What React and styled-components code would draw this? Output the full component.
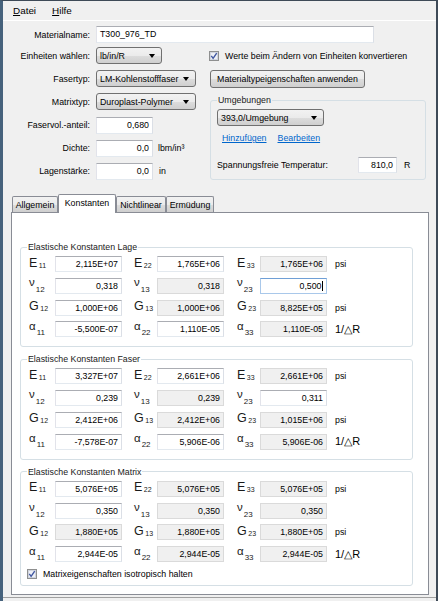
import React from 'react';
import styled, { createGlobalStyle, css } from 'styled-components';

const FONT = `"Liberation Sans", Arial, sans-serif`;

const GlobalStyle = createGlobalStyle`
  html, body { margin: 0; padding: 0; background: #f0f0f0; }
  body { font-family: ${FONT}; font-size: 8.8px; color: #000; }
  * { box-sizing: border-box; }
`;

const Window = styled.div`
  width: 438px;
  height: 601px;
  border-left: 3px solid #46627c;
  border-right: 2px solid #3e4a57;
  border-top: 1px solid #3e4a57;
  background: #f0f0f0;
  display: flex;
  flex-direction: column;
  overflow: hidden;
`;

const MenuBar = styled.div`
  height: 20px;
  flex: none;
  display: flex;
  align-items: center;
  gap: 16px;
  padding-left: 10px;
  border-bottom: 1px solid #ffffff;
  font-size: 9.9px;
`;

const MenuItem = styled.span`
  color: #000;
  & u { text-decoration: underline; text-underline-offset: 1px; }
`;

const TopArea = styled.div`
  flex: none;
  padding-top: 5px;
  display: flex;
  flex-direction: column;
  gap: 4px;
`;

const FieldRow = styled.div`
  display: flex;
  align-items: center;
  height: 17px;
`;

const Label = styled.span`
  width: 87px;
  margin-right: 6px;
  text-align: right;
  white-space: nowrap;
  flex: none;
`;

const Unit = styled.span`
  margin-left: ${p => p.$ml ?? 5}px;
  white-space: nowrap;
`;

const TextBox = styled.div`
  flex: none;
  height: ${p => p.$h ?? 16}px;
  width: ${p => (p.$w ? `${p.$w}px` : 'auto')};
  border: 1px solid;
  border-color: #abadb3 #dbdfe6 #e3e9ef #e2e3ea;
  background: #ffffff;
  text-align: ${p => (p.$left ? 'left' : 'right')};
  padding: 0 3px;
  line-height: ${p => (p.$h ?? 16) - 2}px;
  white-space: nowrap;
  overflow: hidden;
  ${p => p.$disabled && css`
    background: #f0f0f0;
    border-color: #dadada;
  `}
  ${p => p.$focus && css`
    border-color: #6f9fd6 #a9c8ea #a9c8ea #a9c8ea;
  `}
`;

const Caret = styled.span`
  display: inline-block;
  width: 1px;
  height: 10px;
  background: #000;
  margin-left: 0.5px;
  vertical-align: -2px;
`;

const btnFace = css`
  border: 1px solid #707070;
  border-radius: 3px;
  background: linear-gradient(to bottom, #f2f2f2 0%, #ebebeb 50%, #dddddd 51%, #cfcfcf 100%);
`;

const Combo = styled.div`
  ${btnFace}
  flex: none;
  width: ${p => p.$w}px;
  height: 17px;
  display: flex;
  align-items: center;
  justify-content: space-between;
  padding: 0 6px 0 3px;
  white-space: nowrap;
`;

const Arrow = styled.span`
  width: 0;
  height: 0;
  border-left: 3.5px solid transparent;
  border-right: 3.5px solid transparent;
  border-top: 4px solid #000;
  flex: none;
`;

const Button = styled.div`
  ${btnFace}
  width: ${p => p.$w}px;
  height: 18px;
  margin-left: 1px;
  margin-top: 6px;
  display: flex;
  align-items: center;
  justify-content: center;
  white-space: nowrap;
`;

const Columns = styled.div`
  display: flex;
`;

const LeftCol = styled.div`
  width: 206px;
  flex: none;
  display: flex;
  flex-direction: column;
  gap: 6.2px;
`;

const RightCol = styled.div`
  width: 217px;
  flex: none;
  display: flex;
  flex-direction: column;
`;

const CheckRow = styled.div`
  display: flex;
  align-items: center;
  gap: 6px;
  height: ${p => p.$h ?? 17}px;
  margin-left: ${p => p.$ml ?? 0}px;
  margin-top: ${p => p.$mt ?? 0}px;
  white-space: nowrap;
`;

const Group = styled.fieldset`
  margin: ${p => p.$mt ?? 0}px 0 0 ${p => p.$ml ?? 0}px;
  width: ${p => p.$w}px;
  border: 1px solid #d5dfe5;
  border-radius: 3px;
  padding: 3px ${p => p.$pr ?? 0}px ${p => p.$pb ?? 6}px ${p => p.$pl ?? 0}px;
  min-inline-size: 0;
`;

const Legend = styled.legend`
  padding: 0 1px;
  margin-left: ${p => p.$ml ?? 0}px;
  line-height: 12px;
  height: 12px;
  color: #1a1a1a;
`;

const LinkRow = styled.div`
  display: flex;
  gap: 11px;
  height: 12px;
  align-items: center;
  margin: 6px 0 0 5px;
`;

const Link = styled.span`
  color: #0066cc;
  text-decoration: underline;
`;

const TempRow = styled.div`
  display: flex;
  align-items: center;
  height: 16px;
  margin-top: 13px;
`;

const TempLabel = styled.span`
  width: 141px;
  flex: none;
  white-space: nowrap;
`;

const TabArea = styled.div`
  flex: 1;
  display: flex;
  flex-direction: column;
  margin: 14px 0 2px 8px;
  width: 418px;
  min-height: 0;
`;

const TabStrip = styled.div`
  height: 18px;
  flex: none;
  display: flex;
  align-items: flex-end;
  padding-left: 1px;
`;

const Tab = styled.div`
  width: ${p => p.$w}px;
  height: ${p => (p.$active ? 19 : 16)}px;
  margin-bottom: ${p => (p.$active ? -1 : 0)}px;
  border: 1px solid #898c95;
  border-bottom: none;
  border-radius: 2px 2px 0 0;
  display: flex;
  align-items: center;
  justify-content: center;
  white-space: nowrap;
  padding-bottom: ${p => (p.$active ? 3 : 0)}px;
  ${p => p.$active
    ? css`
        background: #ffffff;
        position: relative;
        z-index: 1;
      `
    : css`
        background: linear-gradient(to bottom, #f2f2f2 0%, #ebebeb 50%, #dddddd 51%, #cfcfcf 100%);
      `}
`;

const Panel = styled.div`
  flex: 1;
  background: #ffffff;
  border: 1px solid #898c95;
  padding: 28px 0 0 8px;
  display: flex;
  flex-direction: column;
`;

const ConstGrid = styled.div`
  display: grid;
  grid-template-columns: 34px 67px 35px 67px 36px 67px auto;
  grid-auto-rows: 16px;
  row-gap: 5.8px;
  align-items: center;
`;

const Sym = styled.span`
  padding-left: ${p => p.$pad}px;
  white-space: nowrap;
  line-height: 16px;
  color: #1a1a1a;
`;

const SymMain = styled.span`
  display: inline-block;
  vertical-align: ${p => p.$raise ?? 0}px;
  font-size: ${p => (p.$greek ? 11.5 : 12.5)}px;
`;

const SymSub = styled.span`
  font-size: ${p => (p.$greek ? 8 : 7)}px;
  margin-left: ${p => (p.$greek ? 1 : 1.5)}px;
  vertical-align: ${p => (p.$greek ? -2 : -1)}px;
`;

const ConstUnit = styled.span`
  padding-left: 8px;
  white-space: nowrap;
  font-size: ${p => (p.$big ? 11 : 8.8)}px;
`;

const StatusStrip = styled.div`
  height: 4px;
  flex: none;
  border-top: 1px solid #a0a0a0;
  background: #f0f0f0;
`;

const CheckSvg = () => (
  <svg width="10" height="10" viewBox="0 0 10 10" style={{ flex: 'none', display: 'block' }}>
    <rect x="0.5" y="0.5" width="9" height="9" fill="#e6e9f0" stroke="#8e8f8f" />
    <rect x="1.5" y="1.5" width="7" height="7" fill="#eef0f6" stroke="#d0d4de" />
    <path d="M2.3 4.9 L4.1 7.3 L7.7 2.2" stroke="#3f56a0" strokeWidth="1.4" fill="none" />
  </svg>
);

const SYMS = {
  E: { raise: 0, greek: false },
  G: { raise: 0, greek: false },
  'ν': { raise: 4, greek: true },
  'α': { raise: 3, greek: true },
};

const groups = [
  {
    title: 'Elastische Konstanten Lage',
    rows: [
      { k: 'E', unit: 'psi', cells: [['11', '2,115E+07', 'e'], ['22', '1,765E+06', 'e'], ['33', '1,765E+06', 'd']] },
      { k: 'ν', unit: '', cells: [['12', '0,318', 'e'], ['13', '0,318', 'd'], ['23', '0,500', 'f']] },
      { k: 'G', unit: 'psi', cells: [['12', '1,000E+06', 'e'], ['13', '1,000E+06', 'd'], ['23', '8,825E+05', 'd']] },
      { k: 'α', unit: '1/△R', cells: [['11', '-5,500E-07', 'e'], ['22', '1,110E-05', 'e'], ['33', '1,110E-05', 'd']] },
    ],
  },
  {
    title: 'Elastische Konstanten Faser',
    rows: [
      { k: 'E', unit: 'psi', cells: [['11', '3,327E+07', 'e'], ['22', '2,661E+06', 'e'], ['33', '2,661E+06', 'd']] },
      { k: 'ν', unit: '', cells: [['12', '0,239', 'e'], ['13', '0,239', 'd'], ['23', '0,311', 'e']] },
      { k: 'G', unit: 'psi', cells: [['12', '2,412E+06', 'e'], ['13', '2,412E+06', 'd'], ['23', '1,015E+06', 'd']] },
      { k: 'α', unit: '1/△R', cells: [['11', '-7,578E-07', 'e'], ['22', '5,906E-06', 'e'], ['33', '5,906E-06', 'd']] },
    ],
  },
  {
    title: 'Elastische Konstanten Matrix',
    check: 'Matrixeigenschaften isotropisch halten',
    rows: [
      { k: 'E', unit: 'psi', cells: [['11', '5,076E+05', 'e'], ['22', '5,076E+05', 'd'], ['33', '5,076E+05', 'd']] },
      { k: 'ν', unit: '', cells: [['12', '0,350', 'e'], ['13', '0,350', 'd'], ['23', '0,350', 'd']] },
      { k: 'G', unit: 'psi', cells: [['12', '1,880E+05', 'd'], ['13', '1,880E+05', 'd'], ['23', '1,880E+05', 'd']] },
      { k: 'α', unit: '1/△R', cells: [['11', '2,944E-05', 'e'], ['22', '2,944E-05', 'd'], ['33', '2,944E-05', 'd']] },
    ],
  },
];

const PADS = [8, 12, 13];

function ConstGroup({ g, first }) {
  return (
    <Group $w={393} $mt={first ? 0 : 6} $pb={g.check ? 6 : 9}>
      <Legend $ml={6}>{g.title}</Legend>
      <ConstGrid>
        {g.rows.map(r => (
          <React.Fragment key={r.k}>
            {r.cells.map(([sub, val, st], i) => (
              <React.Fragment key={sub}>
                <Sym $pad={PADS[i]}>
                  <SymMain $raise={SYMS[r.k].raise} $greek={SYMS[r.k].greek}>{r.k}</SymMain>
                  <SymSub $greek={SYMS[r.k].greek}>{sub}</SymSub>
                </Sym>
                <TextBox $disabled={st === 'd'} $focus={st === 'f'}>
                  {val}
                  {st === 'f' && <Caret />}
                </TextBox>
              </React.Fragment>
            ))}
            <ConstUnit $big={r.unit.startsWith('1/')}>{r.unit}</ConstUnit>
          </React.Fragment>
        ))}
      </ConstGrid>
      {g.check && (
        <CheckRow $h={10} $ml={6} $mt={7}>
          <CheckSvg />
          <span>{g.check}</span>
        </CheckRow>
      )}
    </Group>
  );
}

export default function App() {
  return (
    <>
      <GlobalStyle />
      <Window>
        <MenuBar>
          <MenuItem><u>D</u>atei</MenuItem>
          <MenuItem><u>H</u>ilfe</MenuItem>
        </MenuBar>
        <TopArea>
          <FieldRow>
            <Label>Materialname:</Label>
            <TextBox $w={278} $h={17} $left>T300_976_TD</TextBox>
          </FieldRow>
          <Columns>
            <LeftCol>
              <FieldRow>
                <Label>Einheiten wählen:</Label>
                <Combo $w={66}>lb/in/R<Arrow /></Combo>
              </FieldRow>
              <FieldRow>
                <Label>Fasertyp:</Label>
                <Combo $w={100}>LM-Kohlenstofffaser<Arrow /></Combo>
              </FieldRow>
              <FieldRow>
                <Label>Matrixtyp:</Label>
                <Combo $w={100}>Duroplast-Polymer<Arrow /></Combo>
              </FieldRow>
              <FieldRow>
                <Label>Faservol.-anteil:</Label>
                <TextBox $w={57} $h={17}>0,680</TextBox>
              </FieldRow>
              <FieldRow>
                <Label>Dichte:</Label>
                <TextBox $w={57} $h={17}>0,0</TextBox>
                <Unit>lbm/in³</Unit>
              </FieldRow>
              <FieldRow>
                <Label>Lagenstärke:</Label>
                <TextBox $w={57} $h={17}>0,0</TextBox>
                <Unit $ml={6}>in</Unit>
              </FieldRow>
            </LeftCol>
            <RightCol>
              <CheckRow>
                <CheckSvg />
                <span>Werte beim Ändern von Einheiten konvertieren</span>
              </CheckRow>
              <Button $w={155}>Materialtypeigenschaften anwenden</Button>
              <Group $w={216} $ml={1} $mt={6} $pl={6} $pb={6}>
                <Legend>Umgebungen</Legend>
                <Combo $w={107}>393,0/Umgebung<Arrow /></Combo>
                <LinkRow>
                  <Link>Hinzufügen</Link>
                  <Link>Bearbeiten</Link>
                </LinkRow>
                <TempRow>
                  <TempLabel>Spannungsfreie Temperatur:</TempLabel>
                  <TextBox $w={39}>810,0</TextBox>
                  <Unit $ml={7}>R</Unit>
                </TempRow>
              </Group>
            </RightCol>
          </Columns>
        </TopArea>
        <TabArea>
          <TabStrip>
            <Tab $w={46}>Allgemein</Tab>
            <Tab $w={58} $active>Konstanten</Tab>
            <Tab $w={50}>Nichtlinear</Tab>
            <Tab $w={48}>Ermüdung</Tab>
          </TabStrip>
          <Panel>
            {groups.map((g, i) => (
              <ConstGroup key={g.title} g={g} first={i === 0} />
            ))}
          </Panel>
        </TabArea>
        <StatusStrip />
      </Window>
    </>
  );
}
